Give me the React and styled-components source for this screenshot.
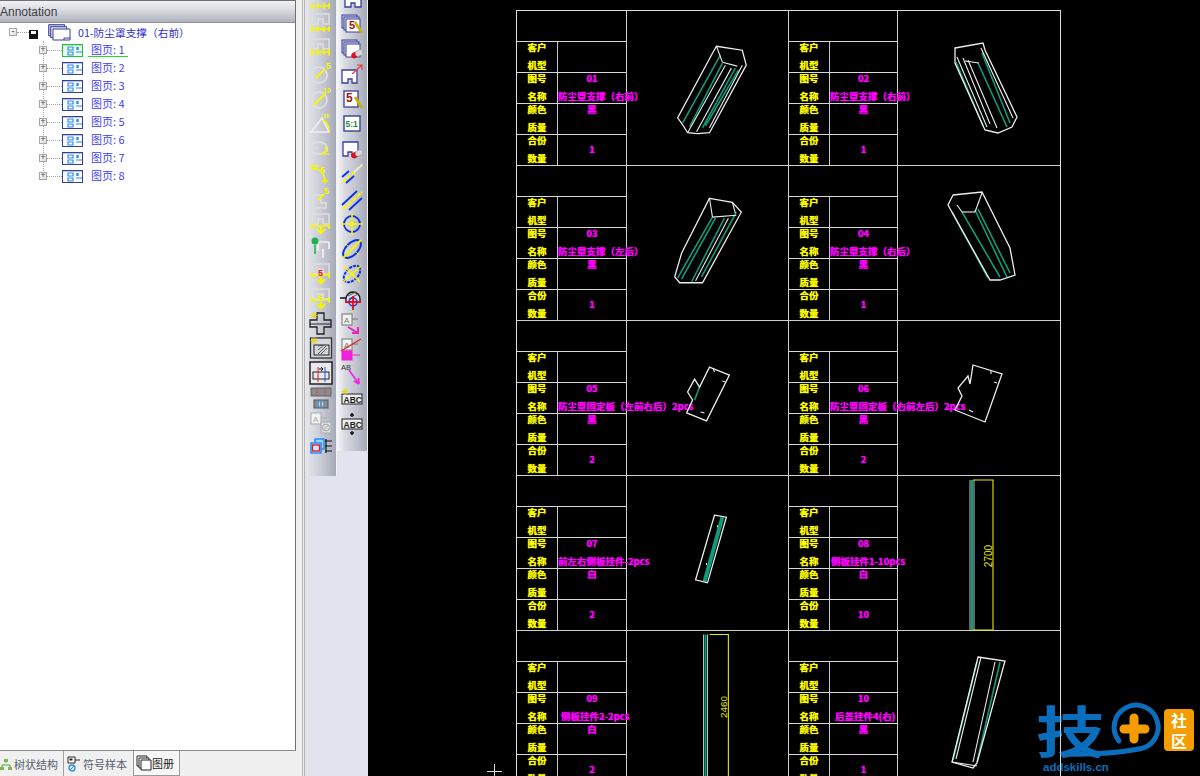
import React from 'react'
import styled, { createGlobalStyle } from 'styled-components'

const CJK = '"Noto Sans CJK SC", "Liberation Sans", sans-serif'

const GlobalStyle = createGlobalStyle`
  html, body {
    margin: 0;
    padding: 0;
    height: 100%;
    overflow: hidden;
    background: #000;
  }
`

const Page = styled.div`
  display: flex;
  width: 1200px;
  height: 776px;
  overflow: hidden;
  font-family: ${CJK};
`

/* left panel */
const Sidebar = styled.aside`
  flex: 0 0 305px;
  display: flex;
  flex-direction: column;
  background: #f0f0f0;
  border-right: 3px double #b4b4b4;
  box-sizing: border-box;
`
const TreePanel = styled.div`
  flex: 1;
  width: 296px;
  box-sizing: border-box;
  background: #fff;
  border-top: 1px solid #707070;
  border-right: 1px solid #707070;
  border-bottom: 1px solid #8a8a8a;
`
const TitleBar = styled.div`
  height: 22px;
  display: flex;
  align-items: center;
  box-sizing: border-box;
  background: linear-gradient(180deg, #f2f2f5 0%, #d9dae0 45%, #aeb1bd 100%);
  border-bottom: 1px solid #8f919a;
  font: 12px "Liberation Sans", sans-serif;
  color: #3c3c44;
`
const RootRow = styled.div`
  display: flex;
  align-items: center;
  height: 18px;
  padding-left: 9px;
`
const RootLabel = styled.span`
  margin-left: 7px;
  font-size: 10.7px;
  color: #2f2fd8;
  white-space: nowrap;
`
const Expander = styled.span`
  flex: 0 0 8px;
  width: 8px;
  height: 8px;
  box-sizing: border-box;
  border: 1px solid #a8a8a8;
  background: linear-gradient(135deg, #fff, #dcdce0);
  font: 9px/6px "Liberation Mono", monospace;
  color: #444;
  text-align: center;
  overflow: hidden;
`
const Dots = styled.span`
  flex: 0 0 ${p => p.$width}px;
  border-top: 1px dotted #a0a0a0;
`
const ChildList = styled.div`
  margin-left: 43px;
  border-left: 1px dotted #a8a8a8;
  width: 200px;
  height: 136px;
`
const ChildRow = styled.div`
  display: flex;
  align-items: center;
  height: 18px;
  margin-left: -5px;
`
const ChildLabel = styled.span`
  margin-left: 4px;
  padding: 0 1px 0 3px;
  font-size: 11px;
  line-height: 13px;
  color: #3f3ff0;
  white-space: nowrap;
  border-bottom: 1px solid ${p => (p.$active ? '#22dd22' : 'transparent')};
  min-width: ${p => (p.$active ? 36 : 0)}px;
`
const TabBar = styled.div`
  flex: 0 0 25px;
  display: flex;
  align-items: center;
  font-size: 11px;
  color: #55606e;
`
const Tab = styled.div`
  display: flex;
  align-items: center;
  gap: ${p => (p.$active ? 0 : 2)}px;
  height: 100%;
  padding: 0 5px 0 ${p => p.$pad}px;
  box-sizing: border-box;
  white-space: nowrap;
  ${p =>
    p.$active
      ? `background:#f7f7f7;color:#222;border:1px solid #9a9a9a;border-top:0;`
      : `border-right:1px solid ${p.$divider ? '#a0a0a0' : 'transparent'};`}
`

/* toolbars */
const ToolArea = styled.div`
  flex: 0 0 63px;
  display: flex;
  align-items: flex-start;
  height: 100%;
  background: #e1e4ee;
`
const Strip = styled.div`
  flex: 0 0 ${p => p.$width}px;
  height: ${p => p.$height}px;
  overflow: hidden;
  box-sizing: border-box;
  border-right: 1px solid #f2f3f6;
  background: linear-gradient(90deg, ${p => p.$from} 0%, #d9dbe2 25%, #c0c3ce 65%, #a5a9b6 100%);
`
const StripInner = styled.div`
  display: flex;
  flex-direction: column;
  align-items: center;
  margin-top: ${p => p.$top}px;
`
const ToolCell = styled.div`
  width: 24px;
  height: 25px;
  display: flex;
  align-items: center;
  justify-content: center;
`
const ToolIcon = styled.svg`
  width: 24px;
  height: 24px;
  display: block;
  font-family: "Liberation Sans", sans-serif;
`

/* drawing */
const Canvas = styled.main`
  position: relative;
  flex: 1;
  background: #000;
  padding: 10px 0 0 148px;
  overflow: hidden;
`
const Sheet = styled.div`
  width: 545px;
  box-sizing: border-box;
  border-top: 1px solid #dcdcdc;
  border-left: 1px solid #dcdcdc;
  border-right: 1px solid #dcdcdc;
`
const SheetRow = styled.div`
  display: grid;
  grid-template-columns: 110px 162px 109px 162px;
  height: 155px;
  box-sizing: border-box;
  border-bottom: 1px solid #cfcfcf;
`
const Entry = styled.div`
  display: grid;
  grid-template-rows: repeat(4, 31px) 30px;
  border-right: 1px solid #cfcfcf;
`
const Blank = styled.div`
  border-bottom: 1px solid #d8d8d8;
`
const InfoRow = styled.div`
  display: grid;
  grid-template-columns: 41px 1fr;
  grid-template-rows: minmax(0, 1fr);
  min-height: 0;
  box-sizing: border-box;
  border-bottom: ${p => (p.$last ? 0 : '1px solid #d8d8d8')};
`
const Stack = styled.div`
  display: flex;
  flex-direction: column;
  justify-content: center;
  min-width: 0;
  min-height: 0;
  box-sizing: border-box;
  padding-bottom: 2px;
  white-space: nowrap;
`
const LabelCell = styled(Stack)`
  border-right: 1px solid #c8c8c8;
  align-items: center;
  color: #ffff00;
  font-size: 9.5px;
  font-weight: 700;
  line-height: 18px;
  text-shadow: 0 0 1px #ffff00;
`
const ValueCell = styled(Stack)`
  color: #ff00ff;
  font-size: 9.5px;
  font-weight: 700;
  line-height: 18px;
  text-align: center;
  text-shadow: 0 0 1px #ff00ff;
`
const NameLine = styled.div`
  text-align: left;
  padding-left: ${p => p.$indent}px;
`
const Picture = styled.div`
  border-right: ${p => (p.$end ? 0 : '1px solid #cfcfcf')};
`
const PartSvg = styled.svg`
  display: block;
  width: 100%;
  height: 154px;
  overflow: visible;
`
const Crosshair = styled.svg`
  position: absolute;
  left: 119px;
  top: 764px;
  width: 15px;
  height: 12px;
`
const Logo = styled.svg`
  position: absolute;
  left: 668px;
  top: 698px;
  width: 164px;
  height: 78px;
`

const W = '#eeeeee'
const GR = '#0f9c7a'
const Y = '#e8e800'

const Part = ({ outline, white = [], green = [], thick = 1.6, extra }) => (
  <PartSvg viewBox="1 1 162 154">
    {green.map((l, i) => (
      <line key={i} x1={l[0]} y1={l[1]} x2={l[2]} y2={l[3]} stroke={GR} strokeWidth={thick} />
    ))}
    {white.map((l, i) => (
      <line key={i} x1={l[0]} y1={l[1]} x2={l[2]} y2={l[3]} stroke={W} strokeWidth="1.1" />
    ))}
    {outline && <polygon points={outline} fill="none" stroke={W} strokeWidth="1.3" />}
    {extra}
  </PartSvg>
)

const Rail = ({ x, yellowL, yellowR, top, bottom, label, labelX, labelY }) => (
  <>
    <line x1={x} y1={top} x2={x} y2={bottom} stroke={GR} strokeWidth="2" />
    <line x1={x - 2} y1={top} x2={x - 2} y2={bottom} stroke="#b8c8c8" strokeWidth="1" />
    <line x1={x + 2} y1={top} x2={x + 2} y2={bottom} stroke="#b8c8c8" strokeWidth="1" />
    <polyline
      points={`${yellowL},${top} ${yellowR},${top} ${yellowR},${bottom} ${yellowL},${bottom}`}
      fill="none"
      stroke={Y}
      strokeWidth="1.1"
    />
    <text
      x={labelX}
      y={labelY}
      fill={Y}
      fontSize="10"
      fontFamily="Liberation Sans, sans-serif"
      textAnchor="middle"
      transform={`rotate(-90 ${labelX} ${labelY})`}
    >
      {label}
    </text>
  </>
)

const parts = {
  1: (
    <Part
      outline="91,36 117,40 121,55 84,123 72,124 62,123 57,115 52,108 87,43"
      green={[[95, 45, 57, 113], [97, 53, 64, 117], [110, 58, 77, 118], [113, 60, 80, 116]]}
      white={[[100, 55, 62, 123], [106, 58, 71, 122], [117, 55, 84, 118], [97, 52, 112, 56], [91, 36, 97, 52]]}
    />
  ),
  2: (
    <Part
      outline="58,38 86,33 88,40 120,107 115,117 101,123 88,120 58,53"
      green={[[85, 43, 113, 113], [81, 53, 110, 117], [59, 52, 86, 116]]}
      white={[[60, 47, 90, 117], [66, 48, 93, 114], [71, 50, 100, 118], [84, 38, 116, 108], [68, 51, 82, 53]]}
    />
  ),
  3: (
    <Part
      outline="84,33 107,37 116,47 77,118 54,118 49,112 56,88"
      green={[[87, 52, 52, 113], [90, 53, 56, 114], [99, 53, 66, 117], [111, 47, 76, 112]]}
      white={[[84, 33, 87, 52], [87, 52, 111, 50], [107, 37, 110, 48], [103, 53, 70, 116]]}
    />
  ),
  4: (
    <Part
      outline="56,30 85,27 113,83 118,110 103,115 93,115 51,40"
      green={[[78, 45, 110, 112], [81, 44, 113, 108], [55, 47, 91, 113], [65, 47, 103, 112]]}
      white={[[60, 40, 65, 47], [65, 47, 78, 47], [78, 47, 85, 28]]}
    />
  ),
  5: (
    <Part
      outline="84,47 104,55 81,101 61,93 67,80 62,72 69,59 74,67"
      green={[[74, 67, 69, 80]]}
      white={[[88, 49, 89, 52], [97, 61, 100, 62], [75, 92, 79, 93]]}
    />
  ),
  6: (
    <Part
      outline="76,45 105,54 88,102 58,90 65,76 61,68 71,56 73,64"
      white={[[94, 51, 94, 54], [100, 63, 97, 62], [76, 92, 72, 90]]}
    />
  ),
  7: (
    <Part
      outline="89,40 101,42 82,108 70,105"
      green={[[97, 42, 79, 107]]}
      thick={4}
      white={[[92, 50, 92, 52], [81, 88, 81, 90]]}
    />
  ),
  8: (
    <Part
      extra={
        <Rail x={75} yellowL={76} yellowR={96} top={5} bottom={155} label="2700" labelX={95} labelY={81} />
      }
    />
  ),
  9: (
    <Part
      extra={
        <Rail x={80} yellowL={84} yellowR={103} top={4} bottom={160} label="2460" labelX={102} labelY={77} />
      }
    />
  ),
  10: (
    <Part
      outline="81,27 108,31 80,133 76,138 55,132"
      green={[[103, 32, 80, 132], [80, 32, 56, 130]]}
      white={[[84, 27, 59, 129], [55, 132, 80, 136], [98, 32, 76, 132]]}
    />
  )
}

const entries = [
  { id: '01', name: '防尘罩支撑（右前）', indent: 0, color: '黑', count: 1 },
  { id: '02', name: '防尘罩支撑（右前）', indent: 0, color: '黑', count: 1 },
  { id: '03', name: '防尘罩支撑（左后）', indent: 0, color: '黑', count: 1 },
  { id: '04', name: '防尘罩支撑（右后）', indent: 0, color: '黑', count: 1 },
  { id: '05', name: '防尘罩固定板（左前右后）2pcs', indent: 0, color: '黑', count: 2 },
  { id: '06', name: '防尘罩固定板（右前左后）2pcs', indent: 0, color: '黑', count: 2 },
  { id: '07', name: '前左右侧板挂件-2pcs', indent: 0, color: '白', count: 2 },
  { id: '08', name: '侧板挂件1-10pcs', indent: 1, color: '白', count: 10 },
  { id: '09', name: '侧板挂件2-2pcs', indent: 3, color: '白', count: 2 },
  { id: '10', name: '后盖挂件4(右)', indent: 5, color: '黑', count: 1 }
]

const Info = ({ a, b, children, last }) => (
  <InfoRow $last={last}>
    <LabelCell>
      <div>{a}</div>
      <div>{b}</div>
    </LabelCell>
    {children}
  </InfoRow>
)

const Card = ({ e }) => (
  <Entry>
    <Blank />
    <Info a="客户" b="机型">
      <ValueCell />
    </Info>
    <Info a="图号" b="名称">
      <ValueCell>
        <div>{e.id}</div>
        <NameLine $indent={e.indent}>{e.name}</NameLine>
      </ValueCell>
    </Info>
    <Info a="颜色" b="质量">
      <ValueCell>
        <div>{e.color}</div>
        <div>&nbsp;</div>
      </ValueCell>
    </Info>
    <Info a="合份" b="数量" last>
      <ValueCell>{e.count}</ValueCell>
    </Info>
  </Entry>
)

/* tool icons */
const GRAY = '#dedede'
const YE = '#f6f600'
const NAVY = '#3a3f96'
const BLUE = '#1030e0'

const Plan = ({ c = GRAY }) => (
  <path d="M3 3h17v10h-6v-5h-5v5h-6z" fill="none" stroke={c} strokeWidth="1.6" />
)
const DimH = ({ y = 17 }) => (
  <path d={`M2 ${y}h19M3 ${y - 3}v6M9 ${y - 3}v6M15 ${y - 3}v6M20 ${y - 3}v6`} stroke={YE} strokeWidth="1.6" fill="none" />
)
const Num = ({ x, y, c = YE, s = 9, t = '5' }) => (
  <text x={x} y={y} fill={c} fontSize={s} fontWeight="700">
    {t}
  </text>
)
const Down = ({ c = YE }) => <path d="M12 16v6M8 18l4 4 4-4" stroke={c} strokeWidth="2" fill="none" />
const PageBox = () => (
  <path d="M5 7h16v13h-6v-4h-4v4h-6z" fill="#fff" stroke={NAVY} strokeWidth="1.3" />
)
const Stacked = () => (
  <>
    <rect x="2" y="3" width="15" height="13" fill="#c8cbe8" stroke={NAVY} />
    <rect x="4" y="5" width="15" height="13" fill="#dcdef0" stroke={NAVY} />
  </>
)
const Pencil = () => <path d="M15 10l7 11" stroke="#c8b400" strokeWidth="2.6" />
const Eraser = () => (
  <>
    <ellipse cx="15" cy="18" rx="4" ry="3" fill="#e01020" transform="rotate(-30 15 18)" />
    <ellipse cx="19" cy="16" rx="4" ry="3" fill="#d8d8d8" stroke="#888" strokeWidth=".5" transform="rotate(-30 19 16)" />
  </>
)
const Tag = ({ c = '#777' }) => (
  <>
    <rect x="2" y="2" width="10" height="11" fill="#f2f2f2" stroke={c} />
    <text x="4" y="11" fontSize="8" fill={c}>A</text>
    <path d="M12 7h6" stroke={c} />
  </>
)
const Spark = () => (
  <path d="M5 1v7M1.5 4.5h7M2.5 2l5 5M7.5 2l-5 5" stroke="#e8d800" strokeWidth=".9" />
)
const Abc = () => (
  <>
    <rect x="2" y="7" width="20" height="10" fill="#eee" stroke="#222" />
    <text x="3.5" y="15.5" fontSize="8.5" fill="#222" fontWeight="700">ABC</text>
  </>
)

const leftIcons = [
  <><Plan /><DimH y={20} /><Num x={10} y={10} /></>,
  <><Plan /><DimH y={18} /></>,
  <><Plan /><DimH y={16} /><path d="M3 13v7M20 13v7" stroke={YE} strokeWidth="1.4" /></>,
  <><circle cx="10" cy="14" r="8" fill="none" stroke={GRAY} strokeWidth="1.8" /><path d="M7 17l9-9" stroke={YE} strokeWidth="2.2" /><Num x={17} y={8} /></>,
  <><circle cx="10" cy="14" r="8" fill="none" stroke={GRAY} strokeWidth="1.8" /><path d="M5 19l11-11" stroke={YE} strokeWidth="2.2" /><Num x={14} y={7} s={7} t="10" /></>,
  <><path d="M2 21L13 7l7 14z" fill="none" stroke="#eeeeee" strokeWidth="1.7" /><path d="M14 9a13 13 0 0 1 6 11" stroke={YE} fill="none" strokeWidth="1.6" /><Num x={14} y={7} s={6} t="20" /></>,
  <><ellipse cx="10" cy="12" rx="8" ry="6" fill="none" stroke={GRAY} strokeWidth="1.8" /><path d="M2 12h8" stroke={GRAY} /><path d="M11 18h9" stroke={YE} strokeWidth="1.4" /><Num x={15} y={16} s={7} /></>,
  <><path d="M3 3v5h5q7 2 8 12" fill="none" stroke={YE} strokeWidth="1.6" /><path d="M2 5h8M19 20h-6M16 17v6" stroke={YE} strokeWidth="1.3" /><Num x={11} y={12} s={9} /></>,
  <><path d="M4 9h8v8h5v5H4z" fill="none" stroke={GRAY} strokeWidth="1.6" /><path d="M9 14l6-6" stroke={YE} strokeWidth="2.2" /><Num x={15} y={8} s={9} /></>,
  <><Plan /><path d="M2 15h19M3 12v6M20 12v6" stroke={YE} strokeWidth="1.5" /><Down /></>,
  <><path d="M9 6h11M20 6v7M14 13v9M9 6v9" fill="none" stroke="#f0f0f0" strokeWidth="1.7" /><circle cx="6" cy="5" r="3.5" fill="#20b050" /><path d="M6 9v9" stroke="#20b050" strokeWidth="1.5" /></>,
  <><Plan /><path d="M2 14h19M3 11v6M20 11v6" stroke={YE} strokeWidth="1.5" /><Num x={9} y={15} c="#e02020" s={9} /><Down /></>,
  <><Plan /><path d="M2 14h19M3 11v6M20 11v6" stroke={YE} strokeWidth="1.5" /><Num x={9} y={15} s={9} /><Down /></>,
  <><path d="M8 2h7v7h7v7h-7v7H8v-7H1V9h7z" fill="none" stroke="#222" strokeWidth="1.3" /><path d="M1 13h21" stroke="#222" /><Spark /></>,
  <><rect x="1.5" y="2" width="21" height="20" fill="#d6d8e0" stroke="#333" strokeWidth="1.3" /><rect x="5" y="9" width="15" height="10" fill="none" stroke="#222" /><path d="M9 10l5-1M9 14l6-5M9 18l8-8M12 18l6-6" stroke="#555" /><Spark /></>,
  <><rect x="1" y="1" width="22" height="22" fill="#e8e8ee" stroke="#222" strokeWidth="1.5" /><rect x="4" y="11" width="16" height="7" fill="none" stroke="#222" /><path d="M9 6v15" stroke="#e02020" /><path d="M16 6v15" stroke="#1060e0" /><path d="M10 8h4M12 6l2 2-2 2" stroke="#111" fill="none" /></>,
  <><rect x="2" y="2" width="20" height="8" fill="#8a8a90" stroke="#666" /><path d="M8 2v8M16 2v8" stroke="#d04040" strokeDasharray="2 1" /><rect x="5" y="14" width="14" height="8" fill="#8a8a90" stroke="#555" /><path d="M11 14l-2 4 2 4M13 14l2 4-2 4" stroke="#20a0ff" fill="#cde" /></>,
  <><Tag c="#aaa" /><rect x="12" y="11" width="10" height="11" fill="#ddd" stroke="#aaa" /><circle cx="17" cy="16.500" r="3.500" fill="none" stroke="#aaa" /><path d="M14.500 19l5-5" stroke="#aaa" /></>,
  <><path d="M6 3h9v10H6z" fill="#a0d0ff" stroke="#2090ff" strokeWidth="1.5" /><rect x="2" y="7" width="10" height="10" fill="#cfe6ff" stroke="#2090ff" strokeWidth="1.5" /><rect x="3.500" y="9" width="7" height="6" fill="none" stroke="#e02020" strokeWidth="1.4" /><path d="M16 5h7M16 10h7M16 15h7M17 3v14" stroke="#111" strokeWidth="1.2" /></>
]

const rightIcons = [
  <><PageBox /><path d="M3 2h10" stroke={NAVY} /></>,
  <><Stacked /><rect x="6" y="7" width="14" height="13" fill="#fff" stroke={NAVY} /><Num x={9} y={17} c="#a01010" s={11} /><Pencil /></>,
  <><Stacked /><rect x="6" y="7" width="14" height="13" fill="#fff" stroke={NAVY} /><Eraser /></>,
  <><path d="M2 8h15v13h-5v-4h-4v4H2z" fill="#fff" stroke={NAVY} strokeWidth="1.3" /><path d="M12 12l10-9M17 3h5v5" stroke="#e84040" fill="none" strokeWidth="1.2" /></>,
  <><rect x="4" y="4" width="14" height="16" fill="#fff" stroke={NAVY} strokeWidth="1.3" /><Num x={6} y={15} c="#a01010" s={12} /><Pencil /></>,
  <><rect x="4" y="4" width="16" height="15" fill="#fff" stroke={NAVY} strokeWidth="1.4" /><Num x={5.500} y={15} c="#1a8a3a" s={8.500} t="5:1" /></>,
  <><path d="M3 5h15v14h-6v-4H8v4H3z" fill="#fff" stroke={NAVY} strokeWidth="1.3" /><Eraser /></>,
  <><path d="M2 15l7-6M6 21l8-7" stroke={BLUE} strokeWidth="1.8" /><path d="M3 20L22 3" stroke={YE} strokeWidth="2.2" strokeDasharray="4 2" /><path d="M14 10l8-7" stroke="#e8e8d8" strokeWidth="2" /></>,
  <><path d="M2 18L17 4M9 23l13-12" stroke={BLUE} strokeWidth="1.8" /><path d="M3 22L22 5" stroke={YE} strokeWidth="2.2" strokeDasharray="5 1" /></>,
  <><circle cx="12" cy="12" r="8" fill="none" stroke={BLUE} strokeWidth="1.8" /><path d="M1 12h22M12 1v22" stroke={YE} strokeWidth="1.6" /><circle cx="12" cy="12" r="2" fill={YE} /></>,
  <><ellipse cx="12" cy="12" rx="11" ry="6" fill="none" stroke={BLUE} strokeWidth="2" transform="rotate(-45 12 12)" /><path d="M3 21L21 3" stroke={YE} strokeWidth="2" /><path d="M5 6l3 3M16 15l3 3" stroke={YE} /></>,
  <><ellipse cx="12" cy="12" rx="10" ry="6" fill="none" stroke={BLUE} strokeWidth="2" strokeDasharray="3 1" transform="rotate(-45 12 12)" /><path d="M3 20L21 4M4 4l16 16" stroke={YE} strokeWidth="1.6" /></>,
  <><path d="M0 11h7" stroke="#111" strokeWidth="1.5" /><path d="M6 12a7 7 0 0 1 14 0v3H6z" fill="#ddd" stroke="#111" strokeWidth="1.3" /><path d="M8 9l8-4M9 12l9-5" stroke="#555" /><circle cx="13" cy="15" r="4" fill="none" stroke={BLUE} strokeWidth="1.5" /><path d="M5 15h16M13 9v14" stroke="#e01020" strokeWidth="1.8" /></>,
  <><Tag /><path d="M8 15l10 6M18 15v6h-6" stroke="#f020c0" strokeWidth="2" fill="none" /></>,
  <><Tag /><path d="M1 14L21 2" stroke="#e82020" strokeWidth="1.3" /><rect x="2" y="14" width="10" height="9" fill="#f020e0" stroke="#f020c0" /><path d="M12 18h8" stroke="#f020c0" /></>,
  <><text x="1" y="8" fontSize="7.500" fill="#333">AB</text><path d="M9 8l10 14M19 22l-.5-6M19 22l-5-3" stroke="#f020e0" strokeWidth="1.6" fill="none" /></>,
  <><Abc /><Spark /></>,
  <><Abc /><path d="M12 1v4M10 3h4M12 19v4M10 21h4" stroke="#111" strokeWidth="1.5" /></>
]

const SheetIcon = ({ active }) => {
  const c = active ? '#22c040' : '#3a3f96'
  return (
    <svg width="22" height="13" viewBox="0 0 22 13">
      <rect x=".5" y=".5" width="20" height="12" fill={active ? '#eafbe9' : '#fbfbff'} stroke={c} />
      <path d="M.5.5h20" stroke={c} strokeWidth="1.6" />
      <path d="M6 3h5v3H6zM6 8h5v3H6zM14 8h6" fill="none" stroke="#2e90f0" strokeWidth="1.2" />
      <path d="M15.500 3v3" stroke="#2e90f0" strokeWidth="2.4" />
    </svg>
  )
}

export default function App() {
  const pages = [1, 2, 3, 4, 5, 6, 7, 8]
  const rows = [0, 2, 4, 6, 8]
  return (
    <Page>
      <GlobalStyle />
      <Sidebar>
        <TreePanel>
          <TitleBar>Annotation</TitleBar>
          <RootRow>
            <Expander>-</Expander>
            <Dots $width={12} />
            <svg width="9" height="9" viewBox="0 0 9 9" style={{ margin: '4px 10px 0 0' }}>
              <path d="M0 0h9v9H0z" fill="#111" />
              <path d="M2 1h5v3H2z" fill="#fff" />
            </svg>
            <svg width="23" height="17" viewBox="0 0 23 17">
              <path d="M.7.7h16v11H.7z" fill="#c8cae8" stroke="#3a3f96" />
              <path d="M2.700 2.700h16v11h-16z" fill="#dfe0f2" stroke="#3a3f96" />
              <path d="M5 5h17v11H5z" fill="#fff" stroke="#3a3f96" />
              <path d="M16 16v-2h6" fill="none" stroke="#3a3f96" />
            </svg>
            <RootLabel>01-防尘罩支撑（右前）</RootLabel>
          </RootRow>
          <ChildList>
            {pages.map(n => (
              <ChildRow key={n}>
                <Expander>+</Expander>
                <Dots $width={15} />
                <SheetIcon active={n === 1} />
                <ChildLabel $active={n === 1}>图页: {n}</ChildLabel>
              </ChildRow>
            ))}
          </ChildList>
        </TreePanel>
        <TabBar>
          <Tab $pad={0} $divider>
            <svg width="12" height="12" viewBox="0 0 12 12">
              <path d="M6 1v4M2 10V7h8v3" fill="none" stroke="#5aa040" />
              <path d="M4 1h4v3H4zM0 9h4v3H0zM8 9h4v3H8z" fill="#7bb850" />
            </svg>
            树状结构
          </Tab>
          <Tab $pad={3}>
            <svg width="14" height="16" viewBox="0 0 14 16">
              <path d="M1 1h7v6H1z" fill="#fff" stroke="#222" />
              <path d="M2.500 2.500h3v2h-3z" fill="#222" />
              <path d="M8 4h5" stroke="#222" />
              <circle cx="5" cy="12" r="3" fill="none" stroke="#2a90e8" strokeWidth="1.3" />
              <path d="M3 14l4-4" stroke="#2a90e8" />
            </svg>
            符号样本
          </Tab>
          <Tab $active $pad={2}>
            <svg width="16" height="16" viewBox="0 0 16 16">
              <path d="M1 1h10v10H1z" fill="#fff" stroke="#222" />
              <path d="M3 3h10v10H3z" fill="#fff" stroke="#222" />
              <path d="M5 5h10v10H5z" fill="#fff" stroke="#222" />
            </svg>
            图册
          </Tab>
        </TabBar>
      </Sidebar>

      <ToolArea>
        <Strip $width={32} $height={476} $from="#e6e8ed">
          <StripInner $top={-15}>
            {leftIcons.map((icon, i) => (
              <ToolCell key={i}>
                <ToolIcon viewBox="0 0 24 24">{icon}</ToolIcon>
              </ToolCell>
            ))}
          </StripInner>
        </Strip>
        <Strip $width={31} $height={451} $from="#f6f7f9">
          <StripInner $top={-14}>
            {rightIcons.map((icon, i) => (
              <ToolCell key={i}>
                <ToolIcon viewBox="0 0 24 24">{icon}</ToolIcon>
              </ToolCell>
            ))}
          </StripInner>
        </Strip>
      </ToolArea>

      <Canvas>
        <Sheet>
          {rows.map(r => (
            <SheetRow key={r}>
              <Card e={entries[r]} />
              <Picture>{parts[r + 1]}</Picture>
              <Card e={entries[r + 1]} />
              <Picture $end>{parts[r + 2]}</Picture>
            </SheetRow>
          ))}
        </Sheet>
        <Crosshair viewBox="0 0 15 12">
          <path d="M0 7.500h15M7.500 0v12" stroke="#ddd" />
        </Crosshair>
        <Logo viewBox="0 0 164 78">
          <text
            x="0"
            y="60"
            fill="#0a6ebd"
            fontSize="60"
            fontWeight="700"
            fontFamily='"Noto Sans CJK SC", sans-serif'
            transform="scale(1.15 .92)"
          >
            技
          </text>
          <path
            d="M83 43A22 22 0 1 1 103 51Q70 57 30 56"
            fill="none"
            stroke="#0a6ebd"
            strokeWidth="5"
            strokeLinecap="round"
          />
          <path d="M98 20v21M88 31h21" stroke="#f59c00" strokeWidth="9" strokeLinecap="round" />
          <rect x="128" y="11" width="30" height="42" rx="4" fill="#f59c00" />
          <text x="143" y="29" fill="#fff" fontSize="16" fontWeight="700" fontFamily='"Noto Sans CJK SC", sans-serif' textAnchor="middle">
            社
          </text>
          <text x="143" y="49" fill="#fff" fontSize="16" fontWeight="700" fontFamily='"Noto Sans CJK SC", sans-serif' textAnchor="middle">
            区
          </text>
          <text x="7" y="73" fill="#0a6ebd" fontSize="11.500" fontWeight="700" fontFamily='"Liberation Sans", sans-serif'>
            addskills.cn
          </text>
          <line x1="24.500" y1="0" x2="24.500" y2="78" stroke="#ddd" strokeOpacity=".75" />
        </Logo>
      </Canvas>
    </Page>
  )
}
